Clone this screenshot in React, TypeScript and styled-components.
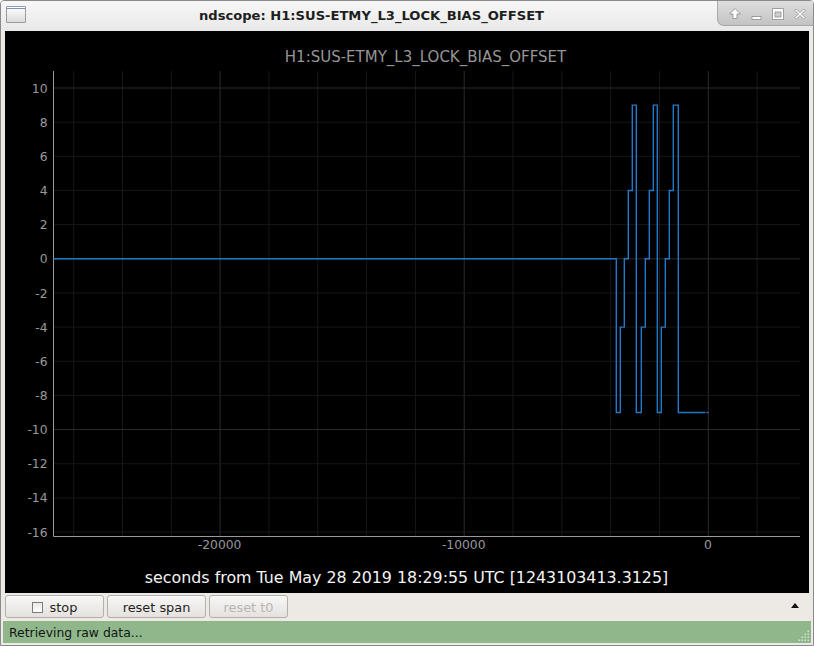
import React from 'react';
import styled, { createGlobalStyle } from 'styled-components';

const Global = createGlobalStyle`
  html, body { margin: 0; padding: 0; background: #ffffff; }
  body { font-family: "DejaVu Sans", "Noto Sans", sans-serif; }
  #root { width: 814px; height: 646px; }
`;

const Window = styled.div`
  width: 814px;
  height: 646px;
  box-sizing: border-box;
  border: 1px solid #8a8a8a;
  border-radius: 4px 4px 0 0;
  display: flex;
  flex-direction: column;
  background: #edeae6;
  overflow: hidden;
`;

const TitleBar = styled.div`
  height: 30px;
  flex: none;
  display: flex;
  align-items: flex-start;
  background: linear-gradient(#f7f7f7, #e8e8e8);
`;

const AppIcon = styled.div`
  margin: 5px 0 0 5px;
  width: 18px;
  height: 15px;
  border: 1px solid #9a9a9a;
  border-radius: 1px;
  background: linear-gradient(#ffffff, #dcdcdc);
  box-shadow: inset 0 1px 0 #ffffff, inset 0 2px 0 #6f95cf;
  flex: none;
`;

const Title = styled.div`
  flex: 1;
  text-align: center;
  font-family: "DejaVu Sans", sans-serif;
  font-weight: bold;
  font-size: 13.1px;
  line-height: 30px;
  color: #1e1e1e;
  white-space: nowrap;
`;

const Controls = styled.div`
  flex: none;
  width: 96px;
  height: 25px;
  box-sizing: border-box;
  display: flex;
  align-items: center;
  justify-content: space-around;
  padding: 2px 2px 0 6px;
  background: linear-gradient(#dedede, #c3c3c3);
  border-left: 1px solid #a8a8a8;
  border-bottom: 1px solid #a8a8a8;
  border-radius: 0 0 0 7px;
`;

const CtlIcon = styled.svg`
  width: 14px;
  height: 14px;
  display: block;
`;

const Central = styled.div`
  flex: 1;
  display: flex;
  flex-direction: column;
  padding: 0 2px 2px;
  min-height: 0;
`;

const PlotArea = styled.div`
  height: 562px;
  margin: 0 2px;
  background: #000000;
  flex: none;
`;

const PlotSvg = styled.svg`
  display: block;
  width: 804px;
  height: 562px;
  font-family: "DejaVu Sans", sans-serif;
`;

const ButtonRow = styled.div`
  height: 27px;
  box-sizing: border-box;
  padding: 2px;
  display: flex;
  align-items: flex-start;
  gap: 3px;
  flex: none;
`;

const Button = styled.div<{ $w: number; $disabled?: boolean }>`
  width: ${p => p.$w}px;
  height: 23px;
  box-sizing: border-box;
  border: 1px solid #b3afab;
  border-radius: 3px;
  background: linear-gradient(#f8f7f6, #e4e1de);
  display: flex;
  align-items: center;
  justify-content: center;
  gap: 7px;
  font-size: 12.9px;
  color: ${p => (p.$disabled ? '#b9b5b1' : '#1f1f1f')};
  padding-top: 1px;
`;

const CheckBox = styled.span`
  width: 9px;
  height: 9px;
  border: 1px solid #7c7c7c;
  background: linear-gradient(#e9e9e9, #ffffff);
  box-sizing: content-box;
  flex: none;
`;

const Spacer = styled.div`
  flex: 1;
`;

const Arrow = styled.div`
  width: 0;
  height: 0;
  border-left: 4px solid transparent;
  border-right: 4px solid transparent;
  border-bottom: 5px solid #111;
  margin: 8px 10px 0 0;
`;

const StatusBar = styled.div`
  margin-top: 1px;
  height: 22px;
  flex: none;
  background: #8fb78b;
  display: flex;
  align-items: center;
  padding-left: 6px;
  font-size: 12.4px;
  color: #141414;
  position: relative;
`;

const Grip = styled.svg`
  position: absolute;
  right: 1px;
  bottom: 1px;
  width: 12px;
  height: 12px;
`;

// plot geometry (page coordinates)
const X0 = 53.5;
const X1 = 800;
const YTOP = 71;
const YBOT = 536.5;
const yOf = (v: number) => 258.8 - (v / 2) * 34.154;
const xOf = (s: number) => 708.3 + (s / 10000) * 244.1;

const yTicks = [10, 8, 6, 4, 2, 0, -2, -4, -6, -8, -10, -12, -14, -16];
const xGrid: number[] = [];
for (let s = 2000; s >= -26000; s -= 2000) {
  if (xOf(s) > X0 + 2 && xOf(s) < X1) xGrid.push(s);
}

const signal: [number, number][] = [
  [X0, 0],
  [616.3, 0], [616.3, -9], [620.3, -9], [620.3, -4], [624.3, -4], [624.3, 0],
  [628.3, 0], [628.3, 4], [632.3, 4], [632.3, 9], [636.3, 9], [636.3, -9],
  [641.3, -9], [641.3, -4], [645.3, -4], [645.3, 0], [649.3, 0], [649.3, 4],
  [653.3, 4], [653.3, 9], [657.3, 9], [657.3, -9], [661.3, -9], [661.3, -4],
  [665.3, -4], [665.3, 0], [669.3, 0], [669.3, 4], [673.3, 4], [673.3, 9],
  [678.3, 9], [678.3, -9], [705.3, -9],
];

const signalPath = signal
  .map(([x, v], i) => `${i === 0 ? 'M' : 'L'}${x} ${yOf(v).toFixed(2)}`)
  .join(' ');

const Plot: React.FC = () => (
  <PlotSvg viewBox="5 31 804 562">
    {xGrid.map(s => (
      <line
        key={`gx${s}`}
        x1={xOf(s)}
        x2={xOf(s)}
        y1={YTOP}
        y2={YBOT}
        stroke={s % 10000 === 0 ? '#2c2c2c' : '#171717'}
        strokeWidth={1}
      />
    ))}
    {yTicks.map(v => (
      <line
        key={`gy${v}`}
        x1={X0}
        x2={X1}
        y1={yOf(v)}
        y2={yOf(v)}
        stroke={v % 10 === 0 ? '#2c2c2c' : '#171717'}
        strokeWidth={1}
      />
    ))}
    <line x1={X0} x2={X0} y1={YTOP} y2={YBOT} stroke="#9a9a9a" strokeWidth={1} />
    <line x1={X0} x2={X1} y1={YBOT} y2={YBOT} stroke="#9a9a9a" strokeWidth={1} />
    {yTicks.map(v => (
      <text key={`ty${v}`} x={47.5} y={yOf(v) + 4.6} fill="#9a9a9a" fontSize={12.3} textAnchor="end">
        {v}
      </text>
    ))}
    {[-20000, -10000, 0].map(s => (
      <text key={`tx${s}`} x={xOf(s) - 0.5} y={549} fill="#9a9a9a" fontSize={12.3} textAnchor="middle">
        {s}
      </text>
    ))}
    <text x={425.5} y={61.5} fill="#969696" fontSize={15} textAnchor="middle">
      H1:SUS-ETMY_L3_LOCK_BIAS_OFFSET
    </text>
    <text x={406.5} y={583} fill="#f4f4f4" fontSize={15.85} textAnchor="middle">
      seconds from Tue May 28 2019 18:29:55 UTC [1243103413.3125]
    </text>
    <path d={signalPath} fill="none" stroke="#1f78c8" strokeWidth={1.4} strokeLinejoin="miter" />
    <line x1={706.3} x2={708.6} y1={yOf(-9)} y2={yOf(-9)} stroke="#1f78c8" strokeWidth={1.4} />
  </PlotSvg>
);

const iconStroke = { stroke: '#8c8c8c', strokeWidth: 0.8, fill: '#ffffff' };

const WindowControls: React.FC = () => (
  <Controls>
    <CtlIcon viewBox="0 0 14 14">
      <path d="M7 1.5 L12.3 7 L9 7 L9 11.5 L5 11.5 L5 7 L1.7 7 Z" {...iconStroke} />
    </CtlIcon>
    <CtlIcon viewBox="0 0 14 14">
      <rect x="2" y="9.5" width="9" height="3" {...iconStroke} />
    </CtlIcon>
    <CtlIcon viewBox="0 0 14 14">
      <path d="M1.5 1.5 H12.5 V12.5 H1.5 Z M4 5 V10 H10 V5 Z" fillRule="evenodd" {...iconStroke} />
    </CtlIcon>
    <CtlIcon viewBox="0 0 14 14">
      <path
        d="M2 3.5 L3.5 2 L7 5.5 L10.5 2 L12 3.5 L8.5 7 L12 10.5 L10.5 12 L7 8.5 L3.5 12 L2 10.5 L5.5 7 Z"
        {...iconStroke}
      />
    </CtlIcon>
  </Controls>
);

const gripDots: [number, number][] = [];
for (let r = 0; r < 4; r++) {
  for (let c = 3 - r; c < 4; c++) gripDots.push([c * 3 + 0.5, r * 3 + 0.5]);
}

export default function App() {
  return (
    <>
      <Global />
      <Window>
        <TitleBar>
          <AppIcon />
          <Title>ndscope: H1:SUS-ETMY_L3_LOCK_BIAS_OFFSET</Title>
          <WindowControls />
        </TitleBar>
        <Central>
          <PlotArea>
            <Plot />
          </PlotArea>
          <ButtonRow>
            <Button $w={99}>
              <CheckBox />
              <span>stop</span>
            </Button>
            <Button $w={99}>reset span</Button>
            <Button $w={79} $disabled>
              reset t0
            </Button>
            <Spacer />
            <Arrow />
          </ButtonRow>
          <StatusBar>
            Retrieving raw data...
            <Grip viewBox="0 0 12 12">
              {gripDots.map(([x, y], i) => (
                <rect key={i} x={x} y={y} width={1.5} height={1.5} fill="#d4e4d2" />
              ))}
            </Grip>
          </StatusBar>
        </Central>
      </Window>
    </>
  );
}
